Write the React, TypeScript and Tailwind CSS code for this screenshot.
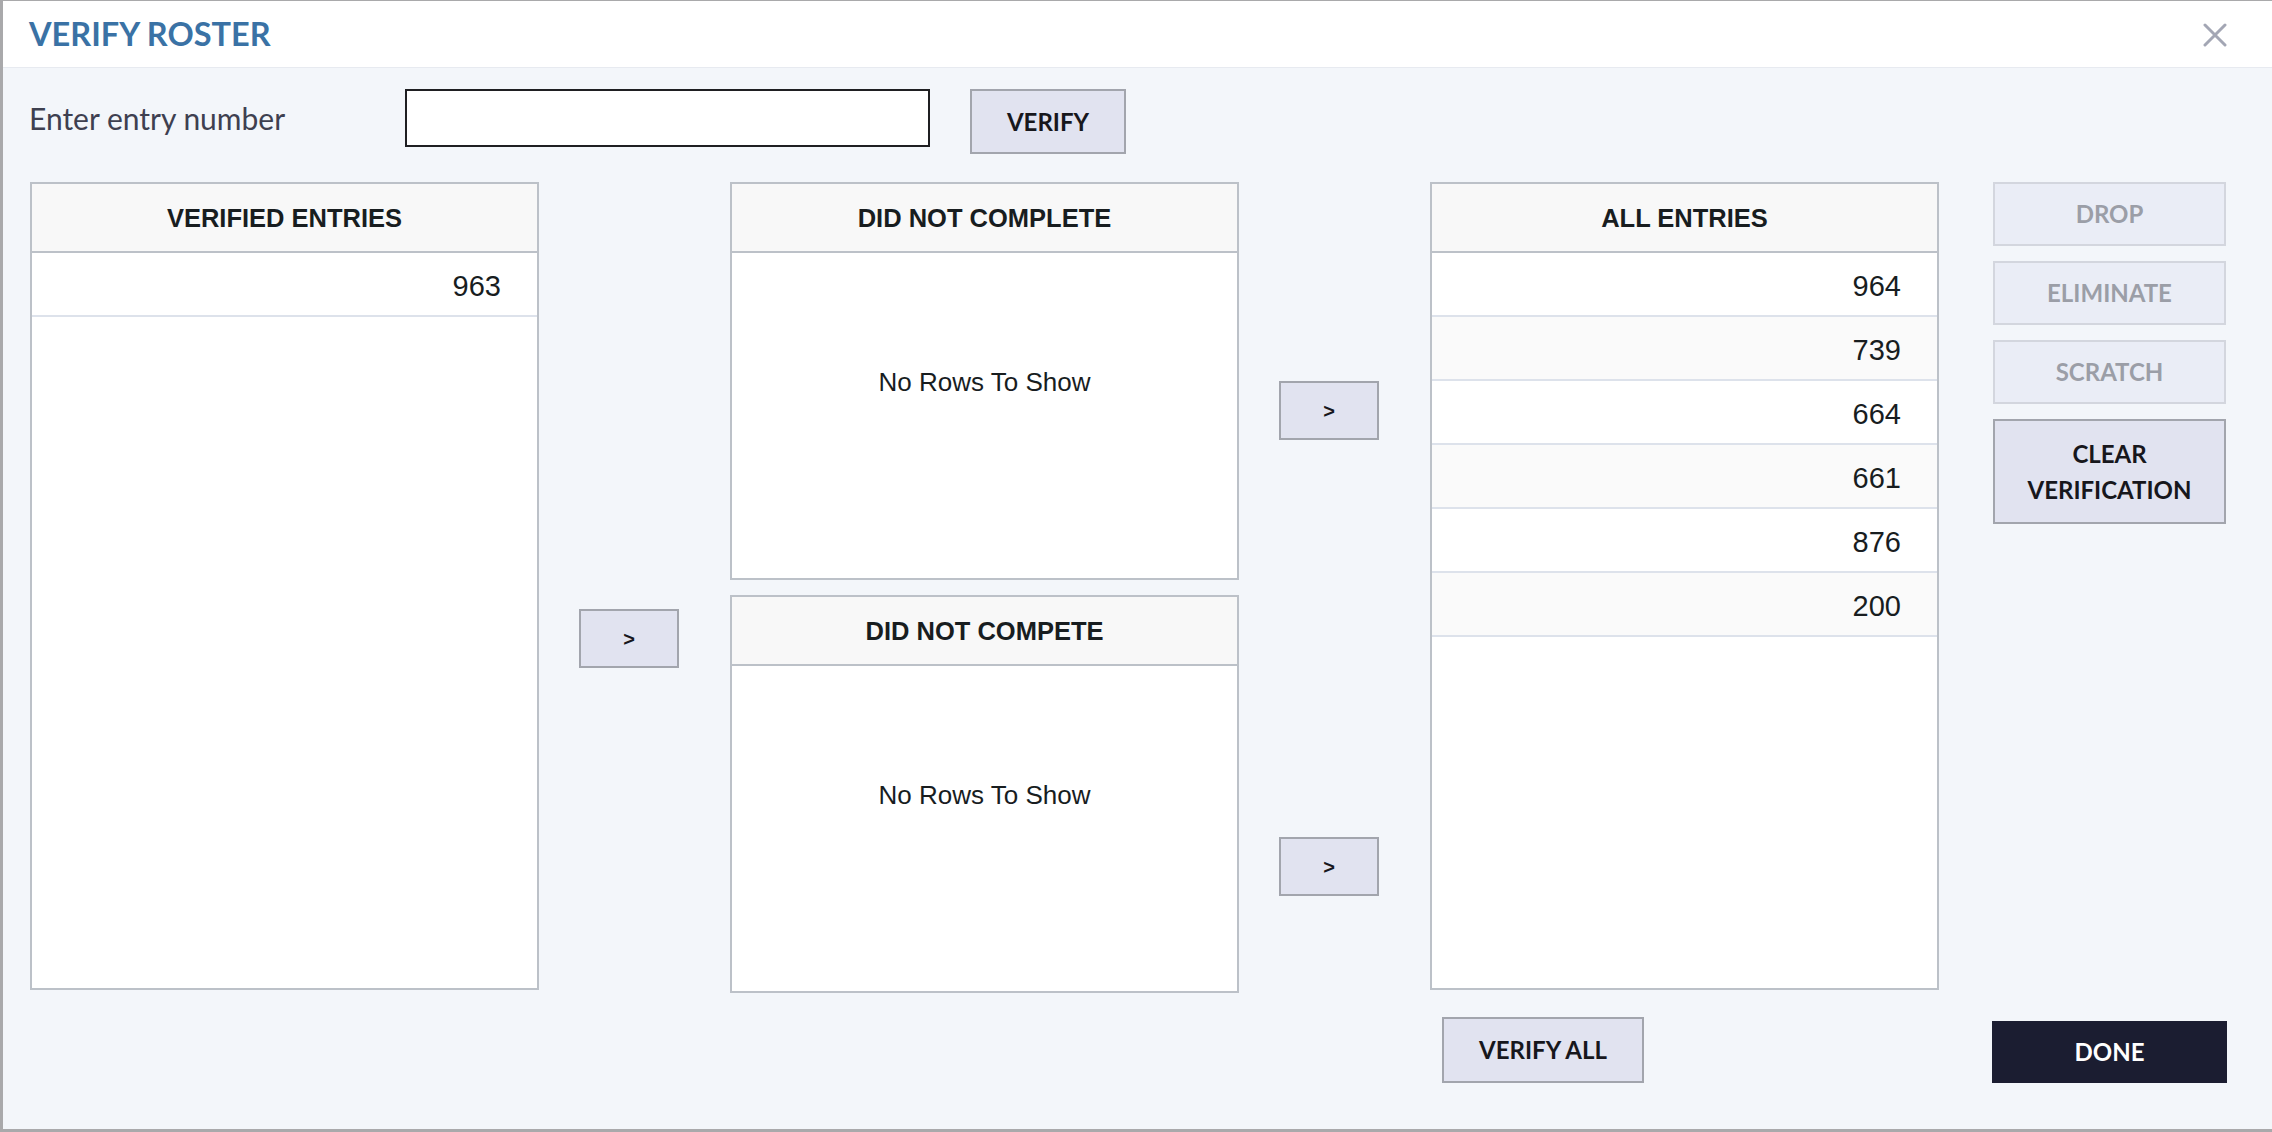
import React from "react";

const allEntries = ["964", "739", "664", "661", "876", "200"];

function Panel({ title, rows, empty, height }: { title: string; rows?: string[]; empty?: boolean; height: string }) {
  return (
    <div className={`w-[509px] ${height} border-2 border-[#bcc1c8] bg-white flex flex-col font-['Liberation_Sans',Arial,sans-serif] text-[#181d1f]`}>
      <div className="h-[69px] shrink-0 bg-[#f8f8f8] border-b-2 border-[#bcc1c8] flex items-center justify-center pt-[2px]">
        <span className="text-[25.5px] font-bold">{title}</span>
      </div>
      {empty ? (
        <div className="flex justify-center pt-[116px]">
          <span className="text-[26px] leading-none">No Rows To Show</span>
        </div>
      ) : (
        <div className="flex flex-col">
          {rows?.map((r, i) => (
            <div
              key={r}
              className={`h-[64px] border-b-2 border-[#dde2eb] flex items-center justify-end pr-[36px] pt-[5px] text-[29px] ${i % 2 === 1 ? "bg-[#fafafa]" : "bg-white"}`}
            >
              {r}
            </div>
          ))}
        </div>
      )}
    </div>
  );
}

function MoveButton({ className }: { className: string }) {
  return (
    <button className={`w-[100px] h-[59px] bg-[#e1e3f0] border-2 border-[#a2a5ad] text-[#17171c] font-['Liberation_Sans',Arial,sans-serif] font-bold text-[20px] ${className}`}>
      &gt;
    </button>
  );
}

function SideButton({ label, disabled, tall }: { label: React.ReactNode; disabled?: boolean; tall?: boolean }) {
  return (
    <button
      className={`w-[233px] ${tall ? "h-[105px]" : "h-[64px]"} border-2 text-[24px] font-bold leading-[36px] ${
        disabled ? "bg-[#eaedf6] border-[#d3d6de] text-[#9b9ea7]" : "bg-[#e1e3f0] border-[#a2a5ad] text-[#17171c]"
      }`}
    >
      {label}
    </button>
  );
}

export default function App() {
  return (
    <div className="w-[2272px] h-[1132px] bg-[#a9a9ab] pl-[3px] pt-[1px] pb-[3px] flex font-['Lato',sans-serif] overflow-hidden">
      <div className="flex-1 flex flex-col bg-[#f3f6fa]">
        <div className="h-[67px] shrink-0 bg-white border-b border-[#e7eaf0] flex items-center justify-between pl-[26px] pr-[45px]">
          <h1 className="text-[32.5px] font-bold text-[#3a72a5] leading-none">VERIFY ROSTER</h1>
          <svg width="24" height="24" viewBox="0 0 24 24" className="mt-[2px]">
            <path d="M2 2 L22 22 M22 2 L2 22" stroke="#a3a6b4" strokeWidth="3" strokeLinecap="round" />
          </svg>
        </div>

        <div className="flex-1 flex flex-col pl-[27px] pt-[21px]">
          <div className="flex items-start">
            <label className="w-[376px] h-[58px] flex items-center -ml-[1px] text-[30px] text-[#3e4050]">Enter entry number</label>
            <input className="w-[525px] h-[58px] bg-white border-2 border-[#1f1f22] outline-none px-3 text-[24px]" />
            <button className="ml-[40px] w-[156px] h-[65px] bg-[#e1e3f0] border-2 border-[#a2a5ad] text-[24px] font-bold text-[#17171c]">VERIFY</button>
          </div>

          <div className="flex items-start mt-[28px]">
            <Panel title="VERIFIED ENTRIES" rows={["963"]} height="h-[808px]" />
            <MoveButton className="ml-[40px] mt-[427px]" />
            <div className="ml-[51px] flex flex-col gap-[15px]">
              <Panel title="DID NOT COMPLETE" empty height="h-[398px]" />
              <Panel title="DID NOT COMPETE" empty height="h-[398px]" />
            </div>
            <div className="ml-[40px] flex flex-col">
              <MoveButton className="mt-[199px]" />
              <MoveButton className="mt-[397px]" />
            </div>
            <div className="ml-[51px]">
              <Panel title="ALL ENTRIES" rows={allEntries} height="h-[808px]" />
            </div>
            <div className="ml-[54px] flex flex-col gap-[15px]">
              <SideButton label="DROP" disabled />
              <SideButton label="ELIMINATE" disabled />
              <SideButton label="SCRATCH" disabled />
              <SideButton
                label={
                  <>
                    CLEAR
                    <br />
                    VERIFICATION
                  </>
                }
                tall
              />
            </div>
          </div>

          <div className="flex items-end pl-[1412px] mt-[24px]">
            <button className="w-[202px] h-[66px] bg-[#e1e3f0] border-2 border-[#a2a5ad] text-[24px] font-bold text-[#17171c]">VERIFY ALL</button>
            <button className="ml-[348px] w-[235px] h-[62px] bg-[#1b1d31] text-white text-[24px] font-bold">DONE</button>
          </div>
        </div>
      </div>
    </div>
  );
}
